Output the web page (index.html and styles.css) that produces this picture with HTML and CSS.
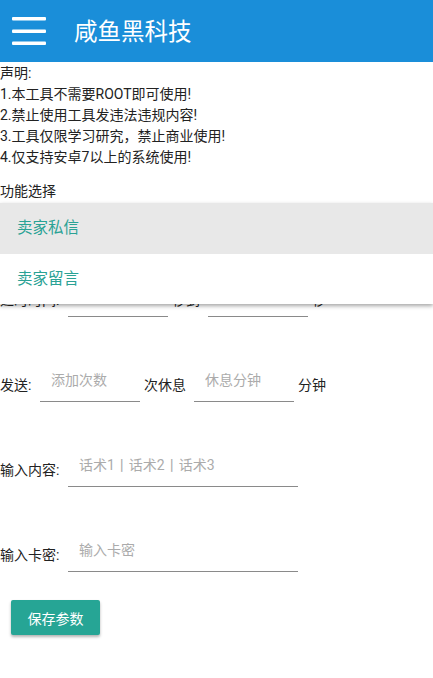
FILE: index.html
```html
<html lang="zh"><head>
    <meta charset="UTF-8">
    <meta name="viewport" content="width=device-width, initial-scale=1.0">
    <title>咸鱼黑科技</title>
    <link rel="stylesheet" href="styles.css">
</head>
<body>
    <div class="toolbar">
        <svg class="menu-icon" width="34" height="30" viewBox="0 0 34 30">
            <rect x="0" y="0" width="34" height="3.5" rx="1" fill="#fff"/>
            <rect x="0" y="12.5" width="34" height="3.5" rx="1" fill="#fff"/>
            <rect x="0" y="24.5" width="34" height="3.5" rx="1" fill="#fff"/>
        </svg>
        <span class="title">咸鱼黑科技</span>
    </div>

    <div class="content">
        <div class="notice">
            <div>声明:</div>
            <div>1.本工具不需要ROOT即可使用!</div>
            <div>2.禁止使用工具发违法违规内容!</div>
            <div>3.工具仅限学习研究，禁止商业使用!</div>
            <div>4.仅支持安卓7以上的系统使用!</div>
        </div>

        <div class="section-label">功能选择</div>
        <div class="spinner"></div>

        <div class="row">
            <span class="label wide">延时时间:</span>
            <input class="field short" type="text">
            <span class="label unit u-two">秒到</span>
            <input class="field short" type="text">
            <span class="label unit">秒</span>
        </div>

        <div class="row">
            <span class="label narrow">发送:</span>
            <input class="field short" type="text" placeholder="添加次数">
            <span class="label unit u-three">次休息</span>
            <input class="field short" type="text" placeholder="休息分钟">
            <span class="label unit">分钟</span>
        </div>

        <div class="row">
            <span class="label wide">输入内容:</span>
            <input class="field long" type="text" placeholder="话术1丨话术2丨话术3">
        </div>

        <div class="row">
            <span class="label wide">输入卡密:</span>
            <input class="field long" type="text" placeholder="输入卡密">
        </div>

        <button class="save-btn" type="button">保存参数</button>

        <div class="dropdown">
            <div class="dropdown-item selected">卖家私信</div>
            <div class="dropdown-item">卖家留言</div>
        </div>
    </div>
</body></html>
```

FILE: styles.css
```css
body {
    margin: 0;
    font-family: Roboto, "Noto Sans CJK SC", "Noto Sans", sans-serif;
    background-color: #fff;
    color: #222;
    width: 433px;
    height: 678px;
    overflow: hidden;
}
.toolbar {
    height: 62px;
    background-color: #1a8ed9;
    display: flex;
    align-items: center;
    padding-left: 12px;
    box-sizing: border-box;
}
.menu-icon {
    display: block;
    margin-top: 2px;
}
.title {
    color: #fff;
    font-size: 23.5px;
    margin-left: 28px;
    line-height: 30px;
    margin-top: 2px;
}
.content {
    position: relative;
    padding-top: 1px;
}
.notice {
    font-size: 14px;
    line-height: 21px;
}
.section-label {
    font-size: 14px;
    line-height: 20px;
    margin-top: 13px;
}
.spinner {
    height: 31px;
}
.row {
    display: flex;
    align-items: flex-end;
    margin-top: 45px;
    font-size: 14px;
}
.label {
    line-height: 20px;
    margin-bottom: 7px;
    white-space: nowrap;
}
.wide {
    width: 68px;
}
.narrow {
    width: 40px;
}
.unit {
    margin-left: 4px;
}
.u-two {
    width: 36px;
}
.u-three {
    width: 50px;
}
.field {
    height: 40px;
    box-sizing: border-box;
    border: none;
    border-bottom: 1px solid #8a8a8a;
    padding: 0 11px 3px;
    font-family: inherit;
    font-size: 14px;
    color: #222;
    background: transparent;
    outline: none;
}
.field::placeholder {
    color: #ababab;
}
.short {
    width: 100px;
}
.long {
    width: 230px;
}
.save-btn {
    margin: 28px 0 0 11px;
    width: 89px;
    height: 35px;
    background-color: #26a595;
    color: #fff;
    border: none;
    border-radius: 2px;
    font-family: inherit;
    font-size: 14px;
    box-shadow: 0 2px 3px rgba(0, 0, 0, 0.3);
    padding: 0;
}
.dropdown {
    position: absolute;
    top: 141px;
    left: 0;
    right: 0;
    background-color: #fff;
    box-shadow: 0 2px 4px rgba(0, 0, 0, 0.35);
}
.dropdown-item {
    height: 50px;
    line-height: 50px;
    padding-left: 17px;
    font-size: 15.5px;
    color: #2aa295;
}
.dropdown-item.selected {
    background-color: #e8e8e8;
    height: 51px;
    line-height: 51px;
}
```
